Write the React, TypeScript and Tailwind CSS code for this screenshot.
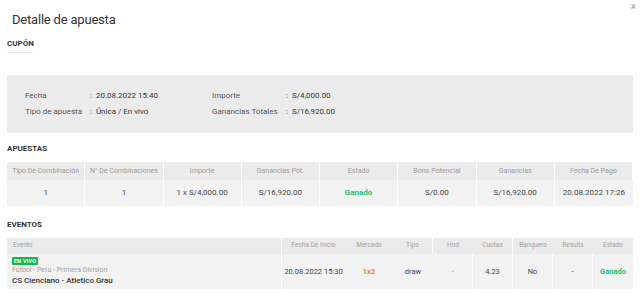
import React from 'react';

const apuestasHead = [
  'Tipo De Combinación',
  'N° De Combinaciones',
  'Importe',
  'Ganancias Pot.',
  'Estado',
  'Bono Potencial',
  'Ganancias',
  'Fecha De Pago',
];

const apuestasRow = ['1', '1', '1 x S/4,000.00', 'S/16,920.00', 'Ganado', 'S/0.00', 'S/16,920.00', '20.08.2022 17:26'];

const App: React.FC = () => {
  return (
    <div className="w-[640px] h-[295px] overflow-hidden bg-white relative font-['Roboto',sans-serif] text-[#333]">
      {/* Close */}
      <button className="absolute right-[4px] top-[2px] text-[10px] leading-none text-[#999]">×</button>

      {/* Title */}
      <h2 className="pl-[12px] pt-[11px] text-[13px] leading-[17px] tracking-[-0.2px] text-[#333]">Detalle de apuesta</h2>

      <div className="px-[7px]">
        {/* Cupón */}
        <div className="mt-[11px] inline-block">
          <p className="text-[8px] font-bold leading-[10px] text-[#333]">CUPÓN</p>
          <div className="mt-[3px] h-px w-[26px] bg-[#e8e8e8]" />
        </div>

        <div className="mt-[22px] h-[58px] bg-[#ebebeb] px-[18px] pt-[13px] text-[8px] text-[#555]">
          <div className="flex h-[16px] items-center">
            <span className="w-[65px]">Fecha</span>
            <span className="w-[122px] text-[#333]">: &nbsp;20.08.2022 15:40</span>
            <span className="w-[74px]">Importe</span>
            <span className="text-[#333]">: &nbsp;S/4,000.00</span>
          </div>
          <div className="flex h-[16px] items-center">
            <span className="w-[65px]">Tipo de apuesta</span>
            <span className="w-[122px] text-[#333]">: &nbsp;Única / En vivo</span>
            <span className="w-[74px]">Ganancias Totales</span>
            <span className="text-[#333]">: &nbsp;S/16,920.00</span>
          </div>
        </div>

        {/* Apuestas */}
        <p className="mt-[11px] text-[8px] font-bold leading-[10px]">APUESTAS</p>
        <div className="mt-[8px] grid grid-cols-8">
          {apuestasHead.map((h) => (
            <div
              key={h}
              className="flex h-[18px] items-center justify-center whitespace-nowrap border-r border-white bg-[#ebebeb] text-[7px] text-[#9a9a9a] last:border-r-0"
            >
              {h}
            </div>
          ))}
          {apuestasRow.map((v, i) => (
            <div
              key={i}
              className={`flex h-[26px] items-center justify-center whitespace-nowrap border-r border-white bg-[#f2f2f2] last:border-r-0 ${
                v === 'Ganado' ? 'text-[8px] font-bold text-[#1fc16b]' : 'text-[8px] text-[#444]'
              }`}
            >
              {v}
            </div>
          ))}
        </div>

        {/* Eventos */}
        <p className="mt-[14px] text-[8px] font-bold leading-[10px]">EVENTOS</p>
        <div className="mt-[8px]">
          <div className="flex h-[16px] whitespace-nowrap bg-[#ebebeb] text-[6.5px] text-[#a0a0a0]">
            <div className="flex w-[275px] items-center border-r border-white pl-[6px]">Evento</div>
            <div className="flex w-[63px] items-center justify-center">Fecha De Inicio</div>
            <div className="flex w-[48px] items-center justify-center">Mercado</div>
            <div className="flex w-[40px] items-center justify-center border-r border-white">Tipo</div>
            <div className="flex w-[40px] items-center justify-center">Hnd</div>
            <div className="flex w-[40px] items-center justify-center border-r border-white">Cuotas</div>
            <div className="flex w-[40px] items-center justify-center">Banquero</div>
            <div className="flex w-[40px] items-center justify-center">Results</div>
            <div className="flex flex-1 items-center justify-center">Estado</div>
          </div>
          <div className="flex h-[35px] whitespace-nowrap bg-[#f2f2f2] text-[7.5px] text-[#444]">
            <div className="flex w-[275px] flex-col justify-center border-r border-white pl-[5px]">
              <span className="w-fit rounded-[1px] bg-[#14b84a] px-[2px] text-[5.5px] font-bold leading-[8px] tracking-[0.2px] text-white">
                EN VIVO
              </span>
              <span className="mt-[1px] text-[7px] leading-[9px] text-[#a0a0a0]">
                Fútbol <span className="text-[#f08a4b]">-</span> Peru - Primera Division
              </span>
              <span className="text-[8px] font-medium leading-[11px] text-[#333]">CS Cienciano - Atletico Grau</span>
            </div>
            <div className="flex w-[63px] items-center justify-center">20.08.2022 15:30</div>
            <div className="flex w-[48px] items-center justify-center font-bold text-[#f07a2a]">1x2</div>
            <div className="flex w-[40px] items-center justify-center">draw</div>
            <div className="flex w-[40px] items-center justify-center border-r border-white text-[#999]">-</div>
            <div className="flex w-[40px] items-center justify-center border-r border-white">4.23</div>
            <div className="flex w-[40px] items-center justify-center border-r border-white">No</div>
            <div className="flex w-[40px] items-center justify-center border-r border-white font-bold text-[#1fc16b]">-</div>
            <div className="flex flex-1 items-center justify-center text-[7.5px] font-bold text-[#1fc16b]">Ganado</div>
          </div>
        </div>
      </div>
    </div>
  );
};

export default App;
